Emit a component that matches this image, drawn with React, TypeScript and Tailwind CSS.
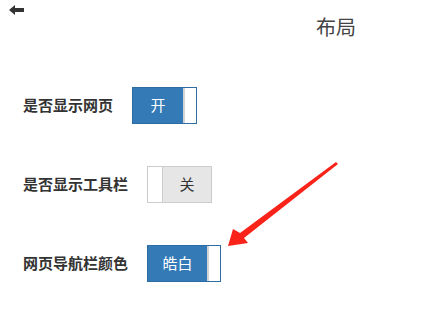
import React from "react";

const font = { fontFamily: '"Noto Sans CJK SC", "Noto Sans", sans-serif' };

function OnSwitch({ label, width }: { label: string; width: string }) {
  return (
    <div className={`flex h-[37px] ${width} border border-[#2e6da4] bg-white`}>
      <div className="flex flex-1 items-center justify-center bg-[#337ab7] text-[15px] text-white">
        {label}
      </div>
      <div className="w-[13px] border-l-2 border-[#d4d4d4] bg-white" />
    </div>
  );
}

function OffSwitch({ label }: { label: string }) {
  return (
    <div className="flex h-[37px] w-[65px] border border-[#cccccc] bg-white">
      <div className="w-[15px] border-r border-[#cccccc] bg-white" />
      <div className="flex flex-1 items-center justify-center bg-[#e6e6e6] text-[15px] text-[#333]">
        {label}
      </div>
    </div>
  );
}

export default function App() {
  return (
    <div className="relative h-[320px] w-[446px] overflow-hidden bg-white" style={font}>
      <div className="relative h-[87px]">
        <svg className="absolute left-[9px] top-[5px]" width="15" height="10" viewBox="0 0 15 10">
          <polygon points="0,5 6,0 6,10" fill="#333" />
          <rect x="5" y="3" width="10" height="4" fill="#333" />
        </svg>
        <div className="absolute left-[316px] top-[15px] text-[20px] leading-[24px] text-[#444]">布局</div>
      </div>
      <div className="flex flex-col gap-[42px] pl-[23px]">
        <div className="flex items-center gap-[19px]">
          <span className="text-[15px] font-bold text-[#333]">是否显示网页</span>
          <OnSwitch label="开" width="w-[65px]" />
        </div>
        <div className="flex items-center gap-[19px]">
          <span className="text-[15px] font-bold text-[#333]">是否显示工具栏</span>
          <OffSwitch label="关" />
        </div>
        <div className="flex items-center gap-[19px]">
          <span className="text-[15px] font-bold text-[#333]">网页导航栏颜色</span>
          <OnSwitch label="皓白" width="w-[74px]" />
        </div>
      </div>
      <svg className="pointer-events-none absolute left-0 top-0" width="446" height="320" viewBox="0 0 446 320">
        <polygon
          points="228,246 248,243 244,238 338,164 336,162 240,233 233,229"
          fill="#fa2319"
        />
      </svg>
    </div>
  );
}
